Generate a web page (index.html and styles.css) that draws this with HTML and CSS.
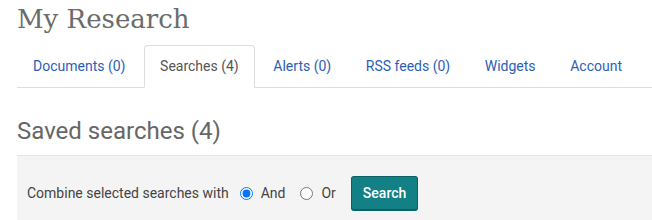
FILE: index.html
```html
<!DOCTYPE html>
<html>
<head>
<meta charset="utf-8">
<link rel="stylesheet" href="styles.css">
</head>
<body>
<div class="page">
  <h1 class="title">My Research</h1>
  <ul class="tabs">
    <li class="tab"><a href="#">Documents (0)</a></li>
    <li class="tab active"><a href="#">Searches (4)</a></li>
    <li class="tab"><a href="#">Alerts (0)</a></li>
    <li class="tab"><a href="#">RSS feeds (0)</a></li>
    <li class="tab"><a href="#">Widgets</a></li>
    <li class="tab"><a href="#">Account</a></li>
  </ul>
  <h2 class="subtitle">Saved searches (4)</h2>
  <div class="panel">
    <span class="label">Combine selected searches with</span>
    <label class="opt"><input type="radio" name="op" checked> And</label>
    <label class="opt"><input type="radio" name="op"> Or</label>
    <button class="btn">Search</button>
  </div>
</div>
</body>
</html>
```

FILE: styles.css
```css
html, body {
  margin: 0;
  padding: 0;
  background: #fff;
  overflow: hidden;
}
body {
  font-family: Roboto, "Liberation Sans", sans-serif;
  font-size: 14px;
  color: #444;
}
.page {
  padding-left: 17px;
}
.title {
  font-family: "DejaVu Serif", "Liberation Serif", serif;
  font-weight: normal;
  font-size: 26px;
  color: #6b6b6b;
  margin: 0;
  padding-top: 3px;
  line-height: 32px;
  height: 42px;
}
.tabs {
  list-style: none;
  margin: 0;
  padding: 0;
  display: flex;
  border-bottom: 1px solid #ddd;
  height: 42px;
}
.tab {
  margin-right: 2.6px;
}
.tab a {
  display: block;
  padding: 10px 15px;
  line-height: 20px;
  border: 1px solid transparent;
  border-radius: 4px 4px 0 0;
  color: #2d5eb6;
  text-decoration: none;
  font-size: 14px;
}
.tab.active a {
  color: #555;
  background: #fff;
  border-color: #ddd #ddd transparent #ddd;
  height: 21px;
}
.subtitle {
  font-weight: normal;
  font-size: 24px;
  color: #666;
  margin: 0;
  padding-top: 28px;
  line-height: 30px;
  height: 39px;
}
.panel {
  background: #f4f4f4;
  border-top: 1px solid #e6e6e6;
  display: flex;
  align-items: center;
  padding: 19px 10px 20px;
  height: 36px;
}
.label {
  font-size: 14px;
  color: #444;
  margin-right: 11px;
}
.opt {
  display: flex;
  align-items: center;
  font-size: 14px;
  color: #444;
  margin-right: 15px;
}
.opt input {
  margin: 0 8px 0 0;
  width: 13px;
  height: 13px;
}
.btn {
  margin-left: 0;
  background: #138086;
  color: #fff;
  border: 1px solid #0c5f63;
  border-bottom-width: 2px;
  border-radius: 3px;
  font-family: Roboto, "Liberation Sans", sans-serif;
  font-weight: 500;
  font-size: 14px;
  padding: 0 11px;
  height: 35px;
}
```
